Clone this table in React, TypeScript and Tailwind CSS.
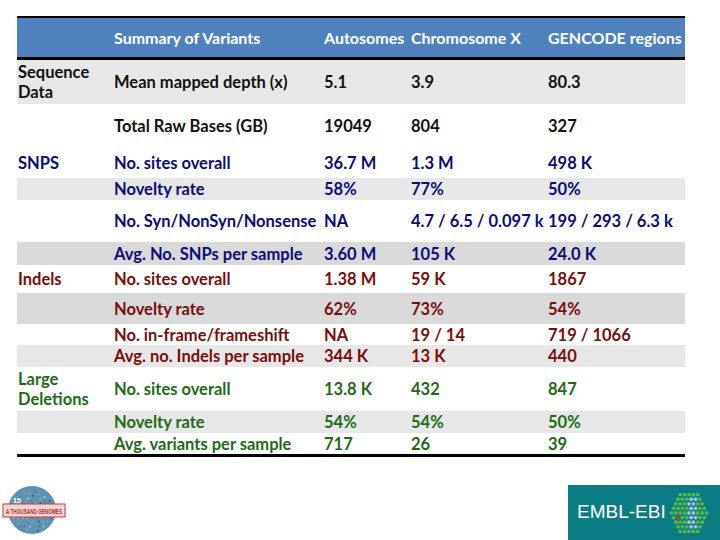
import React from 'react';

type Row = {
  h: number;
  bg: string;
  color: string;
  label?: React.ReactNode;
  cells: string[];
};

const NAVY = 'text-[#0c0c78]';
const RED = 'text-[#7a0d0d]';
const GREEN = 'text-[#1f6a1a]';

const rows: Row[] = [
  { h: 44, bg: 'bg-[#e7e7e7]', color: 'text-[#111]', label: <>Sequence<br />Data</>, cells: ['Mean mapped depth (x)', '5.1', '3.9', '80.3'] },
  { h: 44, bg: 'bg-white', color: 'text-[#111]', cells: ['Total Raw Bases (GB)', '19049', '804', '327'] },
  { h: 30, bg: 'bg-white', color: NAVY, label: 'SNPS', cells: ['No. sites overall', '36.7 M', '1.3 M', '498 K'] },
  { h: 22, bg: 'bg-[#e7e7e7]', color: NAVY, cells: ['Novelty rate', '58%', '77%', '50%'] },
  { h: 42, bg: 'bg-white', color: NAVY, cells: ['No. Syn/NonSyn/Nonsense', 'NA', '4.7 / 6.5 / 0.097 k', '199 / 293 / 6.3 k'] },
  { h: 23, bg: 'bg-[#d9d9d9]', color: NAVY, cells: ['Avg. No. SNPs per sample', '3.60 M', '105 K', '24.0 K'] },
  { h: 28, bg: 'bg-white', color: RED, label: 'Indels', cells: ['No. sites overall', '1.38 M', '59 K', '1867'] },
  { h: 31, bg: 'bg-[#d9d9d9]', color: RED, cells: ['Novelty rate', '62%', '73%', '54%'] },
  { h: 21, bg: 'bg-white', color: RED, cells: ['No. in-frame/frameshift', 'NA', '19 / 14', '719 / 1066'] },
  { h: 22, bg: 'bg-[#e7e7e7]', color: RED, cells: ['Avg. no. Indels per sample', '344 K', '13 K', '440'] },
  { h: 44, bg: 'bg-white', color: GREEN, label: <>Large<br />Deletions</>, cells: ['No. sites overall', '13.8 K', '432', '847'] },
  { h: 22, bg: 'bg-[#e7e7e7]', color: GREEN, cells: ['Novelty rate', '54%', '54%', '50%'] },
  { h: 21, bg: 'bg-white', color: GREEN, cells: ['Avg. variants per sample', '717', '26', '39'] },
];

const GRID = 'grid grid-cols-[96px_210px_87px_137px_138px]';

function ThousandGenomes() {
  const dots: { x: number; y: number; c: string }[] = [];
  const cols = ['#2d4a66', '#9bc3d6', '#c9a046', '#3f6f8f', '#e0e6e9', '#7aa43c'];
  for (let i = 0; i < 70; i++) {
    const a = (i * 137.5 * Math.PI) / 180;
    const r = 21 * Math.sqrt((i + 0.5) / 70);
    dots.push({ x: 31 + r * Math.cos(a), y: 25 + r * Math.sin(a), c: cols[i % cols.length] });
  }
  return (
    <svg width="66" height="52" viewBox="0 0 66 52">
      <circle cx="31" cy="25" r="24" fill="#5d93b3" />
      {dots.map((d, i) => (
        <rect key={i} x={d.x} y={d.y} width="1.6" height="1.6" fill={d.c} opacity="0.8" />
      ))}
      <rect x="2" y="19" width="62" height="13" fill="#f1d6d6" stroke="#c83a3a" strokeWidth="1" />
      <text x="5" y="28.5" fontSize="7.5" fontWeight="700" fill="#c0262d" fontFamily="'Liberation Sans', sans-serif" textLength="56" lengthAdjust="spacingAndGlyphs">
        A THOUSAND GENOMES
      </text>
      <text x="12" y="18" fontSize="7" fontWeight="700" fill="#ffffff" fontFamily="'Liberation Sans', sans-serif">15</text>
    </svg>
  );
}

function EbiHex() {
  const dots: React.ReactNode[] = [];
  const cx = 20;
  const cy = 23;
  for (let r = 0; r < 9; r++) {
    const off = Math.abs(r - 4);
    const count = 9 - off;
    for (let c = 0; c < count; c++) {
      const x = cx - ((count - 1) * 4.4) / 2 + c * 4.4;
      const y = cy - 4 * 4.6 + r * 4.6;
      let fill = '#58b847';
      if ((c === Math.floor(count / 2) || c === Math.floor(count / 2) + 1) && r > 0 && r < 8) fill = '#9ec4d8';
      if (r === 5 && c === 1) fill = '#d23a2c';
      dots.push(<circle key={`${r}-${c}`} cx={x} cy={y} r="1.9" fill={fill} />);
    }
  }
  return (
    <svg width="40" height="46" viewBox="0 0 40 46">
      {dots}
    </svg>
  );
}

export default function App() {
  return (
    <div className="flex h-[540px] w-[720px] flex-col overflow-hidden bg-white font-['Lato','Noto_Sans',sans-serif] font-bold">
      <div className="ml-[17px] mt-[16px] w-[668px]">
        {/* header */}
        <div className={`${GRID} h-[44px] items-center border-t-2 border-b-[3px] border-black bg-[#4f81bd] pt-[1px] text-[16px] text-white`}>
          <div />
          <div className="pl-[1px]">Summary of Variants</div>
          <div className="pl-[1px] whitespace-nowrap">Autosomes</div>
          <div className="pl-[1px] whitespace-nowrap">Chromosome X</div>
          <div className="pl-[1px] whitespace-nowrap">GENCODE regions</div>
        </div>

        {rows.map((r, i) => (
          <div
            key={i}
            className={`${GRID} items-center ${r.bg} ${r.color} text-[16.5px] leading-[20px]`}
            style={{ height: r.h }}
          >
            <div className="pl-[1px]">{r.label}</div>
            {r.cells.map((c, j) => (
              <div key={j} className="pl-[1px] whitespace-nowrap">
                {c}
              </div>
            ))}
          </div>
        ))}
        <div className="h-[3px] bg-black" />
      </div>

      {/* logos */}
      <div className="mt-auto flex items-end justify-between">
        <div className="mb-[3px] ml-[1px]">
          <ThousandGenomes />
        </div>
        <div className="flex h-[55px] w-[152px] items-center bg-[#0b7c84] pl-[9px]">
          <span className="font-['Liberation_Sans',sans-serif] text-[19px] font-normal text-white">EMBL-EBI</span>
          <div className="ml-[3px]">
            <EbiHex />
          </div>
        </div>
      </div>
    </div>
  );
}
